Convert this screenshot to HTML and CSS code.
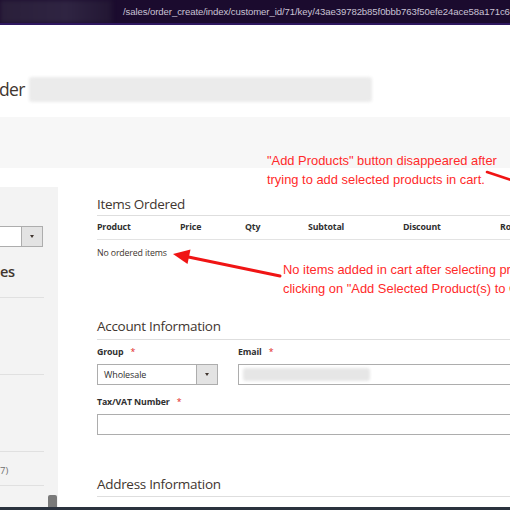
FILE: index.html
```
<!DOCTYPE html>
<html>
<head>
<meta charset="utf-8">
<link rel="stylesheet" href="styles.css">
</head>
<body>
<div class="screen">
  <div class="topbar">
    <div class="tab-blur"></div>
    <div class="url">/sales/order_create/index/customer_id/71/key/43ae39782b85f0bbb763f50efe24ace58a171c6e/</div>
  </div>
  <div class="pagehead">
    <h1 class="title">der</h1>
    <div class="title-blur"></div>
  </div>
  <div class="band"></div>
  <div class="content">
    <aside class="sidebar">
      <div class="side-select"><span class="side-select-val"></span><span class="dd-btn"><span class="caret"></span></span></div>
      <div class="side-title">es</div>
      <div class="side-rule r1"></div>
      <div class="side-rule r2"></div>
      <div class="side-rule r3"></div>
      <div class="side-note">7)</div>
      <div class="side-rule r4"></div>
      <div class="scroll-thumb"></div>
    </aside>
    <main class="main">
      <h2 class="section-title items">Items Ordered</h2>
      <div class="items-head">
        <span>Product</span><span>Price</span><span>Qty</span><span>Subtotal</span><span>Discount</span><span>Row Subtotal</span>
      </div>
      <div class="items-empty">No ordered items</div>

      <h2 class="section-title account">Account Information</h2>
      <div class="field-row">
        <div class="field group">
          <label class="label">Group <span class="req">*</span></label>
          <div class="select"><span class="select-val">Wholesale</span><span class="dd-btn"><span class="caret"></span></span></div>
        </div>
        <div class="field email">
          <label class="label">Email <span class="req">*</span></label>
          <div class="input"><span class="email-blur"></span></div>
        </div>
      </div>
      <div class="field tax">
        <label class="label">Tax/VAT Number <span class="req">*</span></label>
        <div class="input wide"></div>
      </div>
      <h2 class="section-title address">Address Information</h2>
    </main>
  </div>
  <div class="taskbar"></div>

  <div class="note note-top">"Add Products" button disappeared after<br>trying to add selected products in cart.</div>
  <div class="note note-mid">No items added in cart after selecting products and<br>clicking on "Add Selected Product(s) to Order"</div>
  <svg class="arrows" width="510" height="510" viewBox="0 0 510 510">
    <line x1="186" y1="256.5" x2="280" y2="276" stroke="#f01414" stroke-width="3" stroke-linecap="round"/>
    <polygon points="173,254 190.5,249.5 187.5,264" fill="#f01414"/>
    <line x1="487" y1="172" x2="514" y2="181" stroke="#f01414" stroke-width="2.5" stroke-linecap="round"/>
  </svg>
</div>
</body>
</html>
```
FILE: styles.css
```
* { box-sizing: border-box; }
html, body { margin: 0; padding: 0; }
body {
  width: 510px;
  height: 510px;
  overflow: hidden;
  background: #ffffff;
  font-family: "Open Sans", "Liberation Sans", sans-serif;
  color: #41362f;
}
.screen {
  position: relative;
  width: 510px;
  height: 510px;
  overflow: hidden;
  display: flex;
  flex-direction: column;
}
.topbar {
  flex: 0 0 25px;
  height: 25px;
  background: #1b0b2e;
  border-bottom: 2px solid #2e1860;
  display: flex;
  align-items: center;
  overflow: hidden;
}
.tab-blur {
  flex: 0 0 112px;
  height: 23px;
  background: linear-gradient(90deg, #2a1f3a 0%, #2f2442 60%, #221633 100%);
  filter: blur(2px);
}
.url {
  margin-left: 11px;
  white-space: nowrap;
  font-family: "Liberation Sans", sans-serif;
  font-size: 9.6px;
  color: #c9c2d4;
  letter-spacing: -0.1px;
}
.pagehead {
  flex: 0 0 92px;
  height: 92px;
  display: flex;
  align-items: flex-start;
  padding-top: 51px;
  overflow: hidden;
}
.title {
  margin: 0;
  font-weight: 400;
  font-size: 17.5px;
  letter-spacing: -0.6px;
  line-height: 26px;
  color: #41362f;
  margin-left: -1px;
}
.title-blur {
  margin-left: 4px;
  margin-top: 1px;
  width: 343px;
  height: 25px;
  background: #ebebeb;
  border-radius: 3px;
  filter: blur(1.5px);
}
.band {
  flex: 0 0 51px;
  height: 51px;
  background: #f7f7f7;
}
.content {
  flex: 1 1 auto;
  margin-top: 19px;
  display: flex;
  align-items: stretch;
  min-height: 0;
}
.sidebar {
  position: relative;
  flex: 0 0 58px;
  width: 58px;
  background: #f3f3f3;
  display: flex;
  flex-direction: column;
}
.side-select {
  margin-top: 39px;
  width: 43px;
  height: 21px;
  border: 1px solid #adadad;
  border-left: none;
  background: #fff;
  display: flex;
}
.side-select-val { flex: 1 1 auto; }
.dd-btn {
  flex: 0 0 21px;
  width: 21px;
  background: #e3e3e3;
  border-left: 1px solid #adadad;
  display: flex;
  align-items: center;
  justify-content: center;
}
.caret {
  width: 0;
  height: 0;
  border-left: 2.5px solid transparent;
  border-right: 2.5px solid transparent;
  border-top: 3px solid #41362f;
}
.side-title {
  margin-top: 16px;
  font-size: 14.5px;
  letter-spacing: -0.3px;
  line-height: 18px;
  font-weight: 600;
  color: #41362f;
}
.side-rule {
  width: 44px;
  height: 1px;
  background: #e0e0e0;
}
.r1 { margin-top: 16px; }
.r2 { margin-top: 76px; }
.r3 { margin-top: 76px; }
.side-note {
  margin-top: 12px;
  font-size: 9.5px;
  line-height: 14px;
  color: #6f6f6f;
}
.r4 { margin-top: 7px; }
.scroll-thumb {
  position: absolute;
  left: 48px;
  top: 308px;
  width: 9px;
  height: 20px;
  background: #7a7a7a;
  border-radius: 2px 2px 0 0;
}
.main {
  flex: 0 0 520px;
  width: 520px;
  margin-left: 39px;
  display: flex;
  flex-direction: column;
}
.section-title {
  margin: 7px 0 0 0;
  font-size: 13.5px;
  letter-spacing: -0.3px;
  line-height: 18px;
  font-weight: 400;
  color: #41362f;
  padding-bottom: 3px;
  border-bottom: 1px solid #dedede;
}
.section-title.items { margin-top: 8px; padding-bottom: 2px; }
.items-head {
  display: grid;
  grid-template-columns: 83px 65px 63px 95px 97px auto;
  padding: 5px 0 5px 0;
  border-bottom: 1px solid #e3e3e3;
  font-size: 8.8px;
  letter-spacing: -0.15px;
  line-height: 13px;
  font-weight: 700;
  color: #303030;
  white-space: nowrap;
}
.items-empty {
  margin-top: 7px;
  font-size: 8.8px;
  letter-spacing: -0.15px;
  line-height: 13px;
  color: #41362f;
}
.section-title.account { margin-top: 57px; padding-bottom: 4px; }
.field-row {
  display: flex;
  gap: 20px;
}
.field { display: flex; flex-direction: column; }
.field.group { flex: 0 0 121px; }
.field.email { flex: 1 1 auto; }
.label {
  margin-top: 6px;
  font-size: 8.8px;
  letter-spacing: -0.15px;
  line-height: 13px;
  font-weight: 700;
  color: #303030;
}
.req {
  color: #e22626;
  font-weight: 400;
  margin-left: 5px;
}
.select, .input {
  margin-top: 5px;
  height: 21px;
  border: 1px solid #adadad;
  background: #fff;
  display: flex;
  align-items: center;
}
.select-val {
  flex: 1 1 auto;
  padding-left: 6px;
  font-size: 9px;
  letter-spacing: -0.1px;
  color: #303030;
}
.select .dd-btn { align-self: stretch; }
.email-blur {
  margin-left: 4px;
  width: 127px;
  height: 13px;
  background: #e6e6e6;
  border-radius: 3px;
  filter: blur(1.5px);
}
.field.tax .label { margin-top: 11px; }
.input.wide { width: 420px; }
.section-title.address { margin-top: 40px; }
.taskbar {
  position: absolute;
  left: 0;
  bottom: 0;
  width: 510px;
  height: 3px;
  background: #2a323e;
}
.note {
  position: absolute;
  font-family: "Liberation Sans", sans-serif;
  font-size: 12.9px;
  line-height: 19px;
  color: #ff2a2a;
  white-space: nowrap;
}
.note-top { left: 267px; top: 151px; }
.note-mid { left: 283px; top: 260px; }
.arrows {
  position: absolute;
  left: 0;
  top: 0;
  pointer-events: none;
}
```
